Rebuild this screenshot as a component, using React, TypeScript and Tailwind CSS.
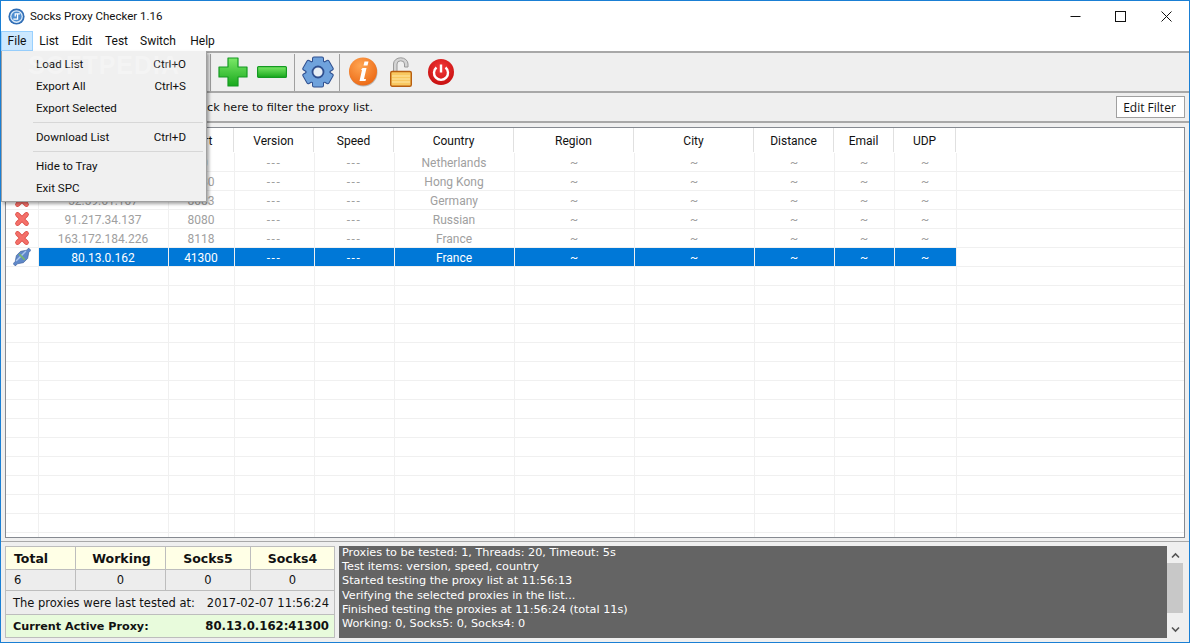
import React from 'react';

const headerCols = [
  { name: '', w: 'w-[33px]' },
  { name: 'IP', w: 'w-[130px]' },
  { name: 'Port', w: 'w-[65px]' },
  { name: 'Version', w: 'w-[80px]' },
  { name: 'Speed', w: 'w-[80px]' },
  { name: 'Country', w: 'w-[120px]' },
  { name: 'Region', w: 'w-[120px]' },
  { name: 'City', w: 'w-[120px]' },
  { name: 'Distance', w: 'w-[80px]' },
  { name: 'Email', w: 'w-[60px]' },
  { name: 'UDP', w: 'w-[62px]' },
];

// rows sit one pixel right of the header from Port on
const rowCols = [
  'w-[130px]',
  'w-[66px]',
  'w-[80px]',
  'w-[80px]',
  'w-[120px]',
  'w-[120px]',
  'w-[120px]',
  'w-[80px]',
  'w-[60px]',
  'w-[62px]',
];

const rows = [
  ['185.61.92.14', '80', 'Netherlands'],
  ['119.28.63.20', '1080', 'Hong Kong'],
  ['52.59.61.107', '8083', 'Germany'],
  ['91.217.34.137', '8080', 'Russian'],
  ['163.172.184.226', '8118', 'France'],
  ['80.13.0.162', '41300', 'France'],
];

const RedCross = () => (
  <svg width="16" height="16" viewBox="0 0 16 16">
    <path d="M3.5 3.5 L12.5 12.5 M12.5 3.5 L3.5 12.5" stroke="#d9473f" strokeWidth="4.6" strokeLinecap="round" />
    <path d="M3.5 3.5 L12.5 12.5 M12.5 3.5 L3.5 12.5" stroke="#f4706a" strokeWidth="3.2" strokeLinecap="round" />
  </svg>
);

const PlugIcon = () => (
  <svg width="18" height="18" viewBox="0 0 18 18">
    <g transform="rotate(-45 9 9)">
      <path d="M-2 7.4 H1 L6 4 H12 L17 7.4 H20 V10.6 H17 L12 14 H6 L1 10.6 H-2 Z" fill="#5f88c9" stroke="#3f5f99" strokeWidth="0.6" />
      <path d="M2 7.6 H16" stroke="#a9c4ec" strokeWidth="1.4" />
      <path d="M9 5 V13" stroke="#78b56e" strokeWidth="1.8" />
    </g>
  </svg>
);

const Gear = () => (
  <svg width="32" height="32" viewBox="0 0 32 32" className="ml-[7px]">
    {[0, 60, 120, 180, 240, 300].map((a) => (
      <rect key={a} x="11" y="1.5" width="10" height="8" rx="1" fill="#2f4f8f" stroke="#2f4f8f" strokeWidth="2" transform={`rotate(${a} 16 16)`} />
    ))}
    <circle cx="16" cy="16" r="11.5" fill="#2f4f8f" stroke="#2f4f8f" strokeWidth="2" />
    {[0, 60, 120, 180, 240, 300].map((a) => (
      <rect key={a} x="11" y="1.5" width="10" height="8" rx="1" fill="#6fa2dc" transform={`rotate(${a} 16 16)`} />
    ))}
    <circle cx="16" cy="16" r="11.5" fill="#6fa2dc" />
    <circle cx="16" cy="16" r="5.5" fill="#e8eef5" stroke="#2f4f8f" strokeWidth="1.8" />
  </svg>
);

const Row = ({ data, selected }: { data?: string[]; selected?: boolean }) => {
  const values = data
    ? [data[0], data[1], '---', '---', data[2], '~', '~', '~', '~', '~']
    : ['', '', '', '', '', '', '', '', '', ''];
  return (
    <div className="flex h-[19px] border-b border-[#f0f0f0] shrink-0">
      <div className="w-[33px] shrink-0 border-r border-[#f0f0f0] flex items-center justify-center">
        {data && (selected ? <PlugIcon /> : <RedCross />)}
      </div>
      {values.map((v, i) => (
        <div
          key={i}
          className={`${rowCols[i]} shrink-0 border-r pt-[1px] pr-[1px] flex items-center justify-center text-[12px] ${
            selected ? 'bg-[#0078d7] text-white border-[#f0f0f0] h-[18px]' : 'border-[#f0f0f0] text-[#a0a0a0]'
          } ${v === '---' ? 'tracking-[1.5px]' : ''}`}
        >
          {v}
        </div>
      ))}
    </div>
  );
};

const MenuItem = ({ label, keys }: { label: string; keys?: string }) => (
  <div className="h-[22px] pt-[1px] flex items-center justify-between pl-[34px] pr-[20px] text-[11.6px] text-[#111]">
    <span>{label}</span>
    {keys && <span>{keys}</span>}
  </div>
);

const Divider = () => <div className="w-px h-[37px] bg-[#a0a0a0] shrink-0" />;

export default function App() {
  return (
    <div className="relative h-[643px] w-[1190px] overflow-hidden border border-[#1a7fd4] bg-white font-['Roboto','Liberation_Sans',sans-serif] text-[#111]">
      {/* title bar */}
      <div className="flex h-[30px] items-center pl-[7px]">
        <svg width="17" height="17" viewBox="0 0 16 16" className="shrink-0">
          <circle cx="8" cy="8" r="7.6" fill="#2f6db5" />
          <circle cx="8" cy="8" r="6" fill="#dcebf9" />
          <circle cx="8" cy="8" r="4.8" fill="#4d8dd0" />
          <path d="M5 10.5 H9 V5.5 H11.2 M9 5.5 H6.8 V8" fill="none" stroke="#fff" strokeWidth="1.2" />
        </svg>
        <span className="ml-[5px] pt-[1px] text-[11.5px]">Socks Proxy Checker 1.16</span>
        <div className="ml-auto flex items-center">
          <div className="w-[45px] flex justify-center">
            <svg width="11" height="11" viewBox="0 0 11 11"><path d="M0.5 5.5 H10.5" stroke="#111" strokeWidth="1" /></svg>
          </div>
          <div className="w-[45px] mr-[1px] flex justify-center">
            <svg width="11" height="11" viewBox="0 0 11 11"><rect x="0.5" y="0.5" width="10" height="10" fill="none" stroke="#111" /></svg>
          </div>
          <div className="w-[45px] flex justify-center">
            <svg width="11" height="11" viewBox="0 0 11 11"><path d="M0.5 0.5 L10.5 10.5 M10.5 0.5 L0.5 10.5" stroke="#111" /></svg>
          </div>
        </div>
      </div>

      {/* menu bar */}
      <div className="flex h-[20px] items-center text-[12px]">
        <div className="w-[32px] h-[20px] flex items-center justify-center bg-[#cce8ff] border border-[#99d1ff]">File</div>
        <div className="w-[32px] text-center">List</div>
        <div className="w-[34px] text-center">Edit</div>
        <div className="w-[35px] text-center">Test</div>
        <div className="w-[48px] text-center">Switch</div>
        <div className="w-[41px] text-center">Help</div>
      </div>

      {/* toolbar */}
      <div className="flex h-[42px] items-center bg-[#efefef] border-y-2 border-[#a8a8a8] pl-[209px]">
        <Divider />
        <svg width="30" height="30" viewBox="0 0 30 30" className="ml-[7px]">
          <defs>
            <linearGradient id="grn" x1="0" y1="0" x2="0" y2="1">
              <stop offset="0" stopColor="#7ce868" />
              <stop offset="1" stopColor="#17a81c" />
            </linearGradient>
          </defs>
          <path d="M10 1 H20 V10 H29 V20 H20 V29 H10 V20 H1 V10 H10 Z" fill="url(#grn)" stroke="#149a22" strokeWidth="1.2" strokeLinejoin="round" />
        </svg>
        <svg width="30" height="12" viewBox="0 0 30 12" className="ml-[9px]">
          <defs>
            <linearGradient id="grn2" x1="0" y1="0" x2="0" y2="1">
              <stop offset="0" stopColor="#7ce868" />
              <stop offset="1" stopColor="#17a81c" />
            </linearGradient>
          </defs>
          <rect x="0.6" y="0.6" width="28.8" height="10.8" rx="1" fill="url(#grn2)" stroke="#149a22" strokeWidth="1.2" />
        </svg>
        <div className="ml-[7px]"><Divider /></div>
        <Gear />
        <div className="ml-[5px]"><Divider /></div>
        <svg width="30" height="30" viewBox="0 0 30 30" className="ml-[8px]">
          <defs>
            <radialGradient id="org" cx="0.4" cy="0.3" r="0.8">
              <stop offset="0" stopColor="#ffa552" />
              <stop offset="1" stopColor="#ea6410" />
            </radialGradient>
          </defs>
          <circle cx="15.5" cy="15.5" r="14" fill="#b8b8b8" />
          <circle cx="15" cy="14.5" r="14" fill="url(#org)" />
          <path d="M16.5 4.5 h4 l-1 4 h-4 Z M14.5 11 h4 l-2.5 11 h2 l-0.5 2 h-6 l2.5 -11 h-1 Z" fill="#fff" />
        </svg>
        <svg width="22" height="30" viewBox="0 0 22 30" className="ml-[12px]">
          <path d="M3.5 15 V7 a7 6 0 0 1 14.5 0 V10 h-3.5 V7 a3.5 3 0 0 0 -7.5 0 V15 Z" fill="#d4d4d4" stroke="#9a9a9a" />
          <rect x="0.7" y="14.5" width="20.6" height="14.8" rx="1.5" fill="#f9c860" stroke="#b85f10" strokeWidth="1.4" />
          <path d="M2 19 H20 M2 22 H20 M2 25 H20" stroke="#fde7a8" strokeWidth="1.2" />
        </svg>
        <svg width="26" height="28" viewBox="0 0 26 28" className="ml-[16px]">
          <defs>
            <radialGradient id="rd" cx="0.5" cy="0.35" r="0.7">
              <stop offset="0" stopColor="#f43a3a" />
              <stop offset="1" stopColor="#c40c0c" />
            </radialGradient>
          </defs>
          <circle cx="13" cy="14" r="13" fill="url(#rd)" />
          <path d="M8.5 9.5 a7 7 0 1 0 9 0" fill="none" stroke="#fff" strokeWidth="2.4" />
          <path d="M13 6.5 V14.5" stroke="#fff" strokeWidth="2.4" />
        </svg>
      </div>

      {/* filter bar */}
      <div className="flex h-[30px] items-center bg-[#efefef] border-b-2 border-[#a8a8a8] pr-[4px] font-['DejaVu_Sans',sans-serif] text-[11.2px]">
        <span className="ml-[192px] pt-[2px]">Click here to filter the proxy list.</span>
        <div className="ml-auto flex h-[22px] w-[69px] pt-[1px] pr-[2px] items-center justify-center border border-[#a0a0a0] bg-white text-[12px] font-['Open_Sans',sans-serif]">Edit Filter</div>
      </div>

      {/* grid */}
      <div className="bg-[#efefef] pt-[4px] px-[4px] pb-[3px] border-b border-[#a8a8a8]">
        <div className="h-[411px] border border-[#868a91] bg-white overflow-hidden">
          <div className="flex h-[25px] shrink-0">
            {headerCols.map((c, i) => (
              <div key={i} className={`${c.w} shrink-0 h-[24px] pt-[2px] border-r border-[#e0e0e0] flex items-center justify-center text-[12px] text-[#111]`}>
                {c.name}
              </div>
            ))}
          </div>
          {rows.map((r, i) => (
            <Row key={i} data={r} selected={i === 5} />
          ))}
          {Array.from({ length: 16 }).map((_, i) => (
            <Row key={i} />
          ))}
        </div>
      </div>

      {/* bottom */}
      <div className="flex h-[100px] bg-[#efefef] pt-[4px] px-[4px] font-['DejaVu_Sans',sans-serif]">
        <div className="w-[330px] h-[92px] shrink-0 border border-[#bdbdbd] bg-[#ededed] text-[11.5px]">
          <div className="flex h-[23px] bg-[#ffffe6] border-b border-[#bdbdbd] font-bold text-[12.5px]">
            <div className="w-[70px] pl-[8px] pt-[3px] flex items-center border-r border-[#bdbdbd]">Total</div>
            <div className="w-[90px] pl-[2px] pt-[3px] flex items-center justify-center border-r border-[#bdbdbd]">Working</div>
            <div className="w-[85px] pt-[3px] flex items-center justify-center border-r border-[#bdbdbd]">Socks5</div>
            <div className="flex-1 pt-[3px] flex items-center justify-center">Socks4</div>
          </div>
          <div className="flex h-[21px] border-b border-[#bdbdbd]">
            <div className="w-[70px] pl-[8px] pt-[1px] flex items-center border-r border-[#bdbdbd]">6</div>
            <div className="w-[90px] pt-[1px] flex items-center justify-center border-r border-[#bdbdbd]">0</div>
            <div className="w-[85px] pt-[1px] flex items-center justify-center border-r border-[#bdbdbd]">0</div>
            <div className="flex-1 pt-[1px] flex items-center justify-center">0</div>
          </div>
          <div className="flex h-[24px] pt-[2px] items-center justify-between pl-[7px] pr-[5px] border-b border-[#bdbdbd]">
            <span>The proxies were last tested at:</span>
            <span>2017-02-07 11:56:24</span>
          </div>
          <div className="flex h-[22px] pt-[2px] items-center justify-between pl-[7px] pr-[5px] bg-[#e8fbdc] font-bold">
            <span className="text-[11.2px]">Current Active Proxy:</span>
            <span className="text-[11.7px]">80.13.0.162:41300</span>
          </div>
        </div>
        <div className="ml-[4px] w-[828px] h-[92px] bg-[#646464] text-white text-[11.25px] leading-[14.2px] px-[3px] whitespace-pre">
          <div>Proxies to be tested: 1, Threads: 20, Timeout: 5s</div>
          <div>Test items: version, speed, country</div>
          <div>Started testing the proxy list at 11:56:13</div>
          <div>Verifying the selected proxies in the list...</div>
          <div>Finished testing the proxies at 11:56:24 (total 11s)</div>
          <div>Working: 0, Socks5: 0, Socks4: 0</div>
        </div>
        <div className="w-[16px] h-[92px] flex flex-col items-center pt-[6px]">
          <svg width="9" height="7" viewBox="0 0 9 7" className="shrink-0"><path d="M1 5.5 L4.5 2 L8 5.5" fill="none" stroke="#555" strokeWidth="1.6" /></svg>
          <div className="w-full h-[50px] mt-[4px] shrink-0 bg-[#c8c8c8]" />
          <svg width="9" height="7" viewBox="0 0 9 7" className="mt-[13px] shrink-0"><path d="M1 1.5 L4.5 5 L8 1.5" fill="none" stroke="#555" strokeWidth="1.6" /></svg>
        </div>
      </div>

      {/* file menu dropdown */}
      <div className="absolute left-[0px] top-[50px] w-[206px] h-[151px] bg-[#f0f0f0] border border-[#a0a0a0] border-t-0 shadow-[2px_2px_3px_rgba(0,0,0,0.35)] pt-[2px]">
        <MenuItem label="Load List" keys="Ctrl+O" />
        <MenuItem label="Export All" keys="Ctrl+S" />
        <MenuItem label="Export Selected" />
        <div className="ml-[31px] mr-[3px] my-[3px] h-px bg-[#d7d7d7]" />
        <MenuItem label="Download List" keys="Ctrl+D" />
        <div className="ml-[31px] mr-[3px] my-[3px] h-px bg-[#d7d7d7]" />
        <MenuItem label="Hide to Tray" />
        <MenuItem label="Exit SPC" />
      </div>

      {/* watermark */}
      <div className="absolute left-[27px] top-[46px] text-[25px] font-bold tracking-[1px] text-white/30 font-['Liberation_Sans',sans-serif] pointer-events-none">
        SOFTPEDIA
      </div>
    </div>
  );
}
